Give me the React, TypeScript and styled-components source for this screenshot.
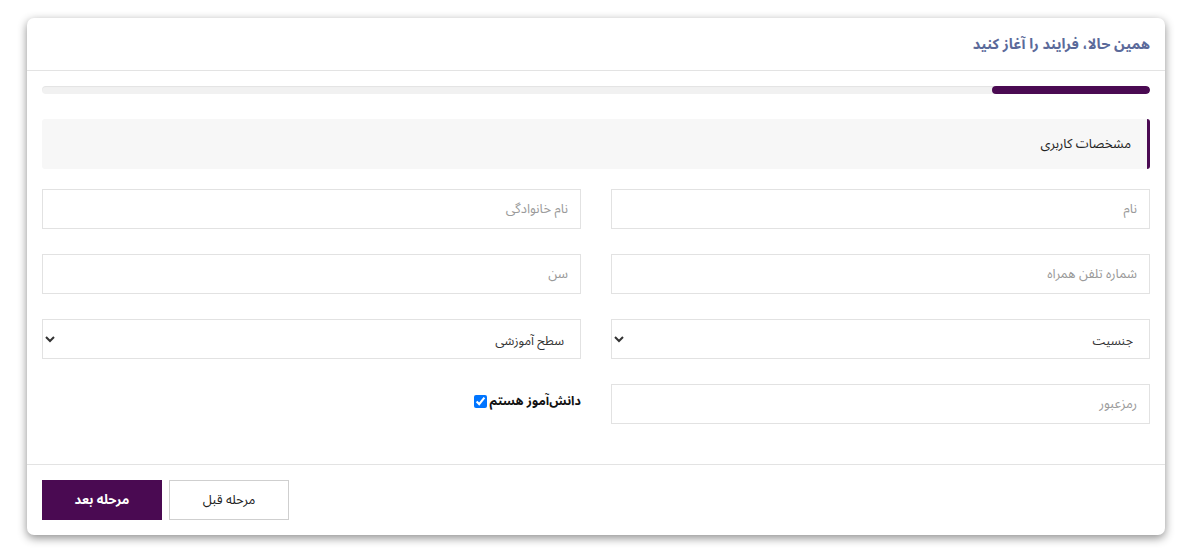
import React from "react";
import styled, { createGlobalStyle } from "styled-components";

const Global = createGlobalStyle`
  html, body { margin: 0; padding: 0; background: #ffffff; }
  body {
    font-family: "Noto Sans Arabic", "DejaVu Sans", "Noto Sans", sans-serif;
  }
  * { box-sizing: border-box; }
`;

const Page = styled.div`
  padding: 18px 19px 24px 27px;
`;

const Card = styled.div`
  direction: rtl;
  width: 1138px;
  background: #fff;
  border-radius: 7px;
  box-shadow: 0 3px 10px rgba(0, 0, 0, 0.45);
  overflow: hidden;
`;

const Header = styled.div`
  height: 53px;
  display: flex;
  align-items: center;
  padding: 0 15px;
  border-bottom: 1px solid #e3e3e3;
`;

const Title = styled.h1`
  margin: 0;
  font-size: 14.5px;
  font-weight: 700;
  color: #5b6a9a;
`;

const Body = styled.div`
  padding: 15px 15px 40px;
`;

const Track = styled.div`
  height: 8px;
  border-radius: 4px;
  background: #f1f1f1;
  box-shadow: inset 0 1px 1px rgba(0, 0, 0, 0.06);
  overflow: hidden;
  display: flex;
`;

const Fill = styled.div`
  height: 100%;
  background: #4a0a52;
  border-radius: 4px;
`;

const Section = styled.div`
  margin-top: 25px;
  height: 50px;
  background: #f7f7f7;
  border-right: 3px solid #4a0a52;
  border-radius: 3px;
  display: flex;
  align-items: center;
  padding-right: 16px;
  font-size: 13px;
  color: #222;
`;

const Grid = styled.div`
  margin-top: 20px;
  display: grid;
  grid-template-columns: 1fr 1fr;
  column-gap: 30px;
  row-gap: 25px;
`;

const Input = styled.input`
  height: 40px;
  width: 100%;
  border: 1px solid #e2e2e2;
  background: #fff;
  padding: 0 12px;
  font-family: inherit;
  font-size: 13px;
  color: #333;
  direction: rtl;
  outline: none;
  &::placeholder { color: #9a9a9a; }
`;

const Select = styled.select`
  height: 40px;
  width: 100%;
  border: 1px solid #e2e2e2;
  border-radius: 0;
  background: #fff;
  padding: 4px 12px 0;
  font-family: inherit;
  font-size: 12.5px;
  color: #333;
  direction: rtl;
  outline: none;
`;

const CheckLabel = styled.label`
  display: flex;
  align-items: center;
  gap: 2px;
  align-self: start;
  margin-top: 4px;
  font-size: 12.5px;
  font-weight: 700;
  color: #111;
`;

const Check = styled.input`
  margin: 0;
  width: 13px;
  height: 13px;
`;

const Footer = styled.div`
  border-top: 1px solid #e3e3e3;
  padding: 15px;
  display: flex;
  justify-content: flex-end;
  gap: 7px;
`;

const Button = styled.button<{ $primary?: boolean }>`
  width: 120px;
  height: 40px;
  font-family: inherit;
  font-size: 13px;
  font-weight: ${(p) => (p.$primary ? 700 : 400)};
  color: ${(p) => (p.$primary ? "#fff" : "#222")};
  background: ${(p) => (p.$primary ? "#4a0a52" : "#fff")};
  border: 1px solid ${(p) => (p.$primary ? "#4a0a52" : "#cfcfcf")};
  cursor: pointer;
`;

export default function App() {
  const progress = 14.3;
  return (
    <>
      <Global />
      <Page>
        <Card>
          <Header>
            <Title>همین حالا، فرایند را آغاز کنید</Title>
          </Header>
          <Body>
            <Track>
              <Fill style={{ width: `${progress}%` }} />
            </Track>
            <Section>مشخصات کاربری</Section>
            <Grid>
              <Input placeholder="نام" />
              <Input placeholder="نام خانوادگی" />
              <Input placeholder="شماره تلفن همراه" />
              <Input placeholder="سن" />
              <Select defaultValue="">
                <option value="">جنسیت</option>
              </Select>
              <Select defaultValue="">
                <option value="">سطح آموزشی</option>
              </Select>
              <Input type="password" placeholder="رمزعبور" />
              <CheckLabel>
                <span>دانش‌آموز هستم</span>
                <Check type="checkbox" defaultChecked />
              </CheckLabel>
            </Grid>
          </Body>
          <Footer>
            <Button>مرحله قبل</Button>
            <Button $primary>مرحله بعد</Button>
          </Footer>
        </Card>
      </Page>
    </>
  );
}
